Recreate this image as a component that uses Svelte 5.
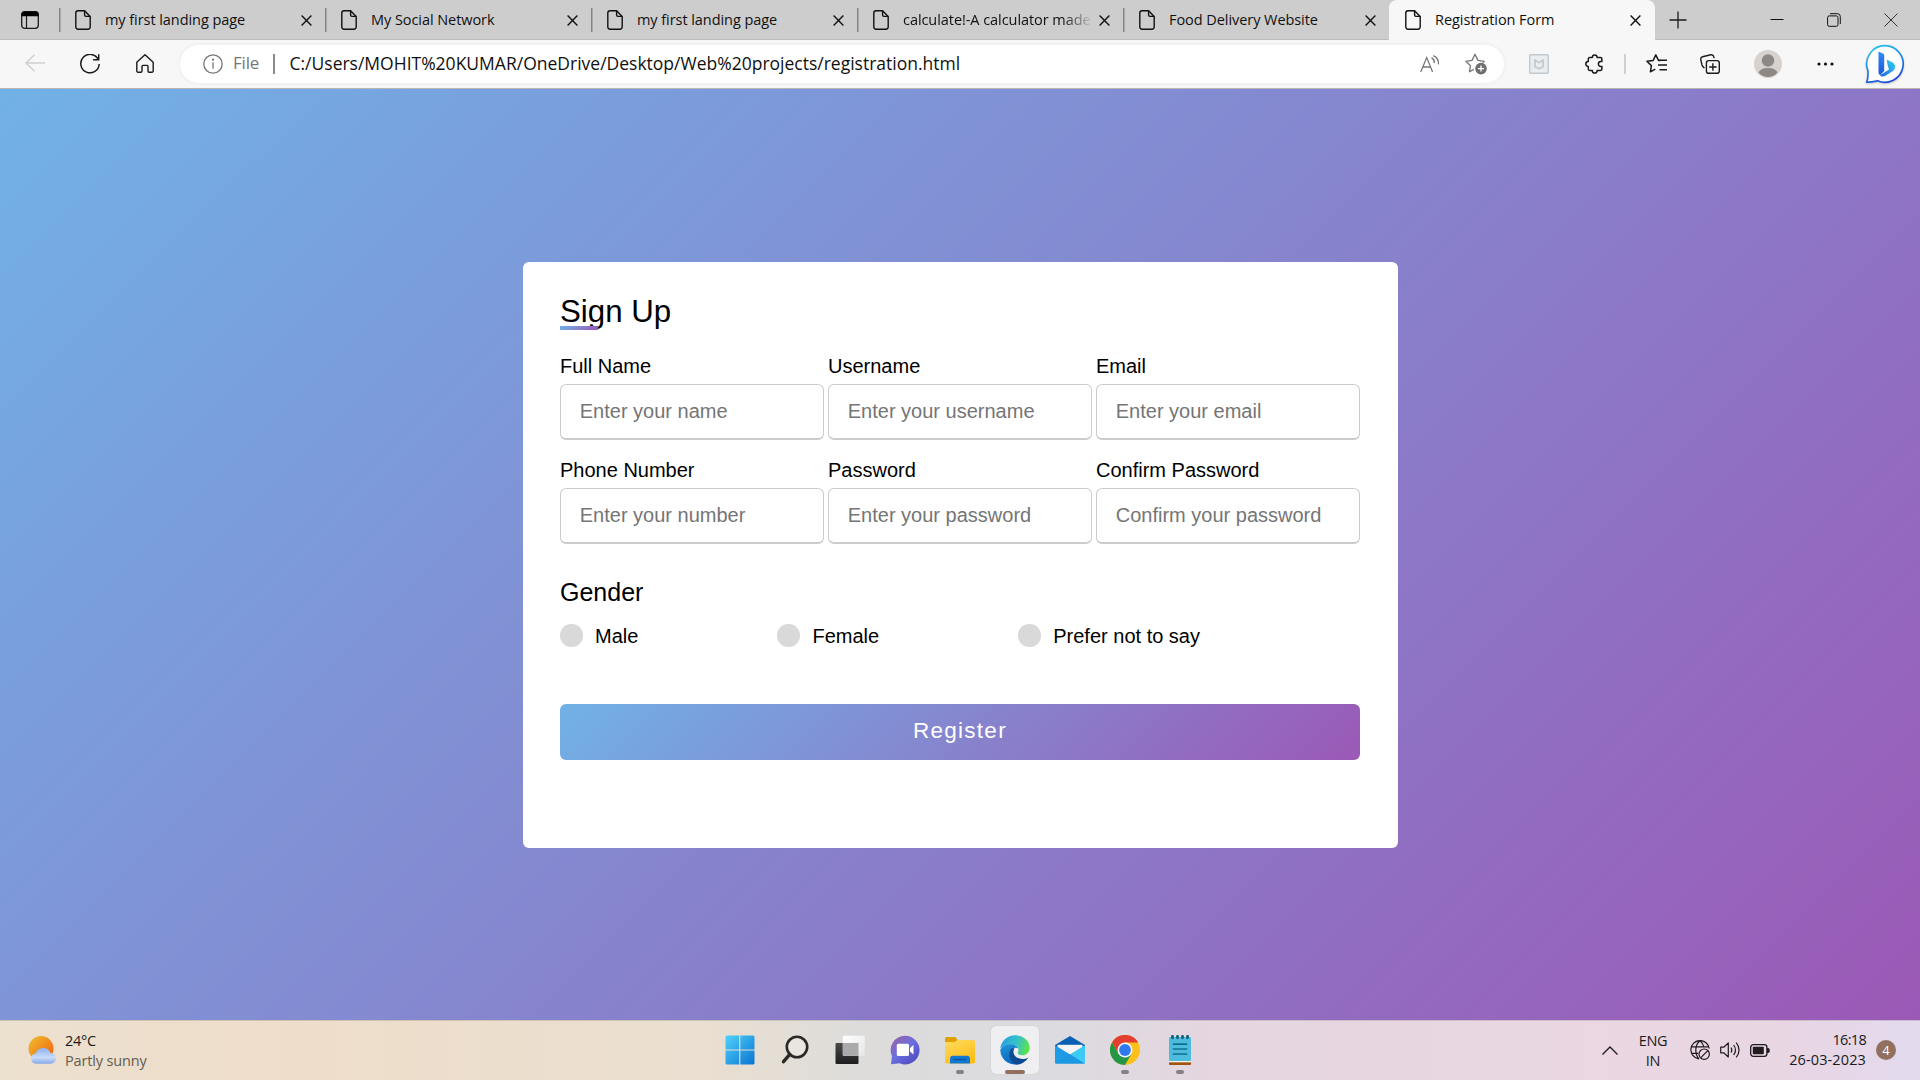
<script>
  const tabs = [
    { title: 'my first landing page' },
    { title: 'My Social Network' },
    { title: 'my first landing page' },
    { title: 'calculate!-A calculator made', clipped: true },
    { title: 'Food Delivery Website' },
    { title: 'Registration Form', active: true }
  ];

  const fields = [
    { label: 'Full Name', placeholder: 'Enter your name', type: 'text' },
    { label: 'Username', placeholder: 'Enter your username', type: 'text' },
    { label: 'Email', placeholder: 'Enter your email', type: 'text' },
    { label: 'Phone Number', placeholder: 'Enter your number', type: 'text' },
    { label: 'Password', placeholder: 'Enter your password', type: 'password' },
    { label: 'Confirm Password', placeholder: 'Confirm your password', type: 'password' }
  ];

  const genders = ['Male', 'Female', 'Prefer not to say'];
</script>

<div class="screen">
  <header class="strip">
    <div class="tab-actions">
      <svg width="18" height="18" viewBox="0 0 18 18">
        <rect x="0.7" y="0.7" width="16.6" height="16.6" rx="3" fill="none" stroke="#1b1b1b" stroke-width="1.3" />
        <path d="M0.5 5.2V3a2.5 2.5 0 0 1 2.5-2.5h12A2.5 2.5 0 0 1 17.5 3v2.2z" fill="#000" />
        <path d="M5.5 5v12" stroke="#1b1b1b" stroke-width="1.2" />
      </svg>
    </div>
    {#each tabs as tab}
      <div class="tab" class:active={tab.active}>
        <svg class="page" width="16" height="20" viewBox="0 0 16 20" fill="none" stroke="#111" stroke-width="1.4" stroke-linejoin="round">
          <path d="M3 0.8h6.6L15.2 6.4V17a2.2 2.2 0 0 1-2.2 2.2H3A2.2 2.2 0 0 1 0.8 17V3A2.2 2.2 0 0 1 3 0.8z" />
          <path d="M9.6 0.8V5a1.4 1.4 0 0 0 1.4 1.4h4.2" />
        </svg>
        <span class="tab-title" class:clipped={tab.clipped}>{tab.title}</span>
        <svg class="x" width="11" height="11" viewBox="0 0 11 11"><path d="M0.6 0.6l9.8 9.8M10.4 0.6L0.6 10.4" stroke="#111" stroke-width="1.4" /></svg>
      </div>
    {/each}
    <div class="new-tab">
      <svg width="18" height="18" viewBox="0 0 18 18"><path d="M9 0.5v17M0.5 9h17" stroke="#1b1b1b" stroke-width="1.3" /></svg>
    </div>
    <div class="window-buttons">
      <svg width="14" height="14" viewBox="0 0 14 14"><path d="M0.5 6.5h13" stroke="#111" /></svg>
      <svg width="14" height="14" viewBox="0 0 14 14" fill="none" stroke="#111">
        <rect x="0.6" y="2.9" width="10.4" height="10.4" rx="1.6" />
        <path d="M3 0.7h7.5a2.8 2.8 0 0 1 2.8 2.8V11" />
      </svg>
      <svg width="14" height="14" viewBox="0 0 14 14"><path d="M0.5 0.5l13 13M13.5 0.5l-13 13" stroke="#333" /></svg>
    </div>
  </header>

  <div class="toolbar">
    <div class="cell w70">
      <svg class="raise" width="20" height="18" viewBox="0 0 20 18" fill="none" stroke="#cfcfcf" stroke-width="1.4"><path d="M20 9H1M9.5 0.7L1 9l8.5 8.3" /></svg>
    </div>
    <div class="cell w40">
      <svg width="20" height="20" viewBox="0 0 20 20" fill="none" stroke="#1b1b1b" stroke-width="1.5"><path d="M18.2 5.4A9.2 9.2 0 1 0 19.2 10M18.7 0.3v5.4h-5.6" /></svg>
    </div>
    <div class="cell w70">
      <svg class="raise" width="18" height="19" viewBox="0 0 18 19" fill="none" stroke="#1b1b1b" stroke-width="1.4" stroke-linejoin="round">
        <path d="M0.8 8.3L9 0.8l8.2 7.5V17a1.2 1.2 0 0 1-1.2 1.2h-2.8A1.2 1.2 0 0 1 12 17v-4.6a1 1 0 0 0-1-1H7a1 1 0 0 0-1 1V17a1.2 1.2 0 0 1-1.2 1.2H2A1.2 1.2 0 0 1 0.8 17z" />
      </svg>
    </div>
    <div class="address">
      <svg class="info" width="20" height="20" viewBox="0 0 20 20" fill="none" stroke="#767676" stroke-width="1.3">
        <circle cx="10" cy="10" r="9.2" /><path d="M10 8.3v6.4" /><circle cx="10" cy="5.7" r="0.5" fill="#767676" />
      </svg>
      <span class="scheme">File</span>
      <span class="bar"></span>
      <span class="url">C:/Users/MOHIT%20KUMAR/OneDrive/Desktop/Web%20projects/registration.html</span>
      <svg class="read" width="20" height="18" viewBox="0 0 20 18" fill="none" stroke="#767676" stroke-width="1.3">
        <path d="M0.7 17L6.7 2.6 12.6 17M2.7 12h7.9" />
        <path d="M11.6 2.6c1.8 1.2 2.8 3 2.8 5.4M13.3 0.6c3.6 1.6 5.4 4.8 5.2 8.8" />
      </svg>
      <svg class="star" width="22" height="22" viewBox="0 0 22 22">
        <path d="M8.8 16.4L4.5 18.7l1-6L0.9 8.3l6.1-0.9L10 1.3l2.9 6.1 6.4 0.9-1.6 1.6" fill="none" stroke="#767676" stroke-width="1.3" stroke-linejoin="round" />
        <circle cx="16" cy="15.6" r="5.8" fill="#6e6e6e" />
        <path d="M16 12.6v6M13 15.6h6" stroke="#fff" stroke-width="1.3" />
      </svg>
    </div>
    <div class="cell w70">
      <svg width="20" height="20" viewBox="0 0 20 20" fill="none" stroke="#c3cacf">
        <rect x="0.7" y="0.7" width="18.6" height="18.6" rx="1" fill="#e9edef" stroke-width="1.4" />
        <path d="M6 6.3l4 2.2 4-2.2v6.3l-4 2.2-4-2.2z" stroke-width="1.8" />
      </svg>
    </div>
    <div class="cell w40">
      <svg width="18" height="20" viewBox="0 0 18 20" fill="none" stroke="#1b1b1b" stroke-width="1.5" stroke-linejoin="round">
        <path d="M4.7 3.5h2.6a2.4 2.6 0 0 1 4.8 0h3.4a1.4 1.4 0 0 1 1.4 1.4v2.7h-1.1a2.4 2.4 0 0 0 0 4.8h1.100v2.700a1.400 1.400 0 0 1-1.400 1.400h-3.400a2.400 2.600 0 0 1-4.800 0h-2.600a1.400 1.400 0 0 1-1.400-1.400v-2.700a2.500 2.400 0 0 1 0-4.800v-2.700a1.400 1.400 0 0 1 1.400-1.400z" />
      </svg>
    </div>
    <div class="cell w22"><span class="divider"></span></div>
    <div class="cell w40">
      <svg width="21" height="20" viewBox="0 0 21 20" fill="none" stroke="#1b1b1b" stroke-width="1.5" stroke-linejoin="round">
        <path d="M14.500 6.600l-2-0.200L9.800 0.900 7.200 6.400l-6.300 0.800 4.500 4.400-1 6.200 4.900-2.700" />
        <path d="M13 6.300h8M12 11h9M13.500 15.700H21" stroke-width="1.400" />
      </svg>
    </div>
    <div class="cell w68">
      <svg width="20" height="20" viewBox="0 0 20 20" fill="none" stroke="#1b1b1b" stroke-width="1.400">
        <rect x="6.400" y="6.600" width="12.900" height="12.700" rx="2.400" />
        <path d="M12.900 9.300v7.400M9.200 13h7.400" />
        <path d="M4.500 13.900L3.600 13.300A4 4 0 0 1 2 11L0.800 5.600A2.400 2.400 0 0 1 2.600 2.800l8.200-2a2.400 2.400 0 0 1 2.900 1.800l0.400 1.600" />
      </svg>
    </div>
    <div class="cell w48">
      <svg width="28" height="28" viewBox="0 0 28 28">
        <circle cx="14" cy="14" r="14" fill="#d5d2cf" />
        <circle cx="14" cy="10.500" r="6.200" fill="#8d8884" />
        <path d="M4.600 22.500C6 19.200 9.600 18 14 18s8 1.200 9.400 4.500A13 13 0 0 1 14 27 13 13 0 0 1 4.600 22.500z" fill="#8d8884" />
      </svg>
    </div>
    <div class="cell w66">
      <svg width="17" height="4" viewBox="0 0 17 4" fill="#111"><circle cx="2" cy="2" r="1.600" /><circle cx="8.500" cy="2" r="1.600" /><circle cx="15" cy="2" r="1.600" /></svg>
    </div>
    <div class="cell w54">
      <svg class="bing" width="40" height="40" viewBox="0 0 40 40">
        <defs>
          <linearGradient id="ring" x1="0.1" y1="0" x2="0.5" y2="1"><stop offset="0" stop-color="#26c6f4" /><stop offset="1" stop-color="#1d4fd8" /></linearGradient>
          <linearGradient id="stem" x1="0" y1="0" x2="0" y2="1"><stop offset="0" stop-color="#2f8df5" /><stop offset="1" stop-color="#1b54dd" /></linearGradient>
          <linearGradient id="bowl" x1="1" y1="0" x2="0" y2="1"><stop offset="0" stop-color="#31dbea" /><stop offset="1" stop-color="#1f5fe6" /></linearGradient>
        </defs>
        <path d="M20 1.700A18.300 18.300 0 1 1 12.600 36.800C9 37.600 5 38.300 1.800 38.200 3 34.500 3.300 31 2.900 26.600A18.300 18.300 0 0 1 20 1.700z" fill="#fff" stroke="url(#ring)" stroke-width="1.700" />
        <path d="M13.500 7.600l4.800 2.100c0.600 0.300 0.900 0.700 0.900 1.400V27l-4.200 4.200c-1-0.700-1.500-1.900-1.500-3.200z" fill="url(#stem)" />
        <path d="M21.600 15.500l6.200 3c2.900 1.700 3 6 0.500 8.200L20.500 31.700c-2.400 1.300-4.400 1-5.500-0.500L24 25.500l-1.400-4.300z" fill="url(#bowl)" />
      </svg>
    </div>
  </div>

  <main class="viewport">
    <form class="card">
      <h1>Sign Up</h1>
      <div class="fields">
        {#each fields as field}
          <label class="field">
            <span>{field.label}</span>
            <input type={field.type} placeholder={field.placeholder} />
          </label>
        {/each}
      </div>
      <h2>Gender</h2>
      <div class="genders">
        {#each genders as gender}
          <div class="gender"><span class="dot"></span>{gender}</div>
        {/each}
      </div>
      <button type="button">Register</button>
    </form>
  </main>

  <footer class="taskbar">
    <div class="weather">
      <svg width="28" height="28" viewBox="0 0 28 28">
        <defs>
          <linearGradient id="sun" x1="0.1" y1="0.1" x2="0.9" y2="0.8"><stop offset="0" stop-color="#f0b62c" /><stop offset="1" stop-color="#ef6c14" /></linearGradient>
          <linearGradient id="cloud" x1="0" y1="0" x2="0" y2="1"><stop offset="0" stop-color="#8fb0ee" /><stop offset="0.600" stop-color="#c9dbf9" /><stop offset="1" stop-color="#86a9ea" /></linearGradient>
        </defs>
        <circle cx="13" cy="12.500" r="12.500" fill="url(#sun)" />
        <path d="M7.500 17.500A8 8 0 0 1 22.500 17a5.400 5.400 0 0 1 0.300 10.800H7.800a5.200 5.200 0 0 1-0.300-10.300z" fill="url(#cloud)" />
      </svg>
      <div class="weather-text"><span>24°C</span><span class="dim">Partly sunny</span></div>
    </div>

    <div class="apps">
      <div class="app">
        <svg width="30" height="30" viewBox="0 0 30 30">
          <defs><linearGradient id="win" x1="0" y1="0" x2="1" y2="1"><stop offset="0" stop-color="#4fd3fd" /><stop offset="1" stop-color="#0a73d0" /></linearGradient></defs>
          <path d="M2 0.500h12.200v14H0.500V2A1.500 1.500 0 0 1 2 0.500zM15.300 0.500H28A1.500 1.500 0 0 1 29.500 2v12.500H15.300zM0.500 15.600h13.700v14H2a1.500 1.500 0 0 1-1.500-1.500zM15.300 15.600h14.200v12.500a1.500 1.500 0 0 1-1.500 1.500H15.300z" fill="url(#win)" />
        </svg>
      </div>
      <div class="app">
        <svg width="30" height="30" viewBox="0 0 30 30" fill="none" stroke="#2b2926">
          <circle cx="17" cy="12" r="10.200" stroke-width="2.600" fill="#fff" fill-opacity="0.250" />
          <path d="M9.800 19.300L3.500 26.600" stroke-width="3.400" stroke-linecap="round" />
        </svg>
      </div>
      <div class="app">
        <svg width="30" height="30" viewBox="0 0 30 30">
          <defs>
            <linearGradient id="tv" x1="0" y1="0" x2="0" y2="1"><stop offset="0" stop-color="#4a4a4a" /><stop offset="1" stop-color="#1d1d1d" /></linearGradient>
            <linearGradient id="tw" x1="0" y1="0" x2="1" y2="1"><stop offset="0" stop-color="#fff" /><stop offset="1" stop-color="#e6e6e6" /></linearGradient>
          </defs>
          <rect x="0.500" y="8" width="23" height="21" rx="1" fill="url(#tv)" />
          <rect x="7.800" y="0.700" width="22" height="20" rx="1" fill="url(#tw)" />
          <path d="M7.800 8h15.700v12.700H7.800z" fill="#aaa" />
        </svg>
      </div>
      <div class="app">
        <svg width="30" height="30" viewBox="0 0 30 30">
          <defs><linearGradient id="chat" x1="0.100" y1="0.200" x2="0.700" y2="0.900"><stop offset="0" stop-color="#8d66b4" /><stop offset="0.500" stop-color="#6a6fe0" /><stop offset="1" stop-color="#5552c4" /></linearGradient></defs>
          <path d="M15 0.800A14.300 14.300 0 1 1 9.500 28.200L1 29.200l1-8A14.300 14.300 0 0 1 15 0.800z" fill="url(#chat)" />
          <rect x="6.800" y="8.700" width="12.200" height="12.200" rx="1.500" fill="#fff" />
          <path d="M20 13l3.500-3v9.600L20 16.600z" fill="#fff" />
        </svg>
      </div>
      <div class="app">
        <svg width="30" height="30" viewBox="0 0 30 30">
          <defs><linearGradient id="folder" x1="0" y1="0" x2="0.600" y2="1"><stop offset="0" stop-color="#ffdc62" /><stop offset="1" stop-color="#fdbe17" /></linearGradient></defs>
          <path d="M1.500 2h8.700l2.600 3-2.600 4H0V3.500A1.500 1.500 0 0 1 1.500 2z" fill="#e0a006" />
          <path d="M0 7h9.600l3-2H28.500A1.500 1.500 0 0 1 30 6.500V27a1.500 1.500 0 0 1-1.500 1.500h-27A1.500 1.500 0 0 1 0 27z" fill="url(#folder)" />
          <path d="M8 20.800h14a3 3 0 0 1 3 3v4.700H5v-4.700a3 3 0 0 1 3-3z" fill="#1279d2" />
          <path d="M8.500 24.500h13" stroke="#0a4f99" stroke-width="1.200" />
        </svg>
        <span class="mark"></span>
      </div>
      <div class="app">
        <div class="tile">
          <svg width="30" height="30" viewBox="0 0 30 30">
            <defs>
              <linearGradient id="e1" x1="0" y1="0.300" x2="1" y2="0.500"><stop offset="0" stop-color="#2a9fe0" /><stop offset="0.550" stop-color="#33c3c8" /><stop offset="1" stop-color="#63e248" /></linearGradient>
              <linearGradient id="e2" x1="0" y1="0" x2="0.400" y2="1"><stop offset="0" stop-color="#1f97dc" /><stop offset="1" stop-color="#0c66bd" /></linearGradient>
            </defs>
            <path d="M0.300 13.500C1.200 5.800 7.300 0.300 15 0.300c8.500 0 14.700 5.700 14.700 12.600 0 4.500-3.400 7.300-7.300 7.300-3.700 0-5.300-1.500-4.400-3.200 1.500-3-0.400-6.700-4.800-7.300C7.600 8.900 3 10.700 0.300 13.500z" fill="url(#e1)" />
            <path d="M0.300 14.600C2.300 10.800 6.500 9 10.900 9.200c4.200 0.200 6.800 2.100 7.400 4.500-2.700-2.500-6.500-0.200-6.800 3.700-0.400 5.300 4 10.600 10 10.700A14.700 14.700 0 0 1 0.300 14.600z" fill="url(#e2)" />
            <path d="M11.900 13.200c-4.200 3.600-3.800 12.900 4.300 16.400 5 0 9.400-3 12.300-7.200-6 3.300-13.800 0.900-14.900-4.200-0.400-2 0-3.600 0.900-4.900z" fill="#0d4b91" />
          </svg>
          <span class="mark wide"></span>
        </div>
      </div>
      <div class="app">
        <svg width="30" height="30" viewBox="0 0 30 30">
          <path d="M0 10L15 1l15 9v8H0z" fill="#0b62b5" />
          <path d="M2.500 9.800h25v10H2.500z" fill="#f6f6f6" />
          <path d="M0 10.200L30 28.500H1A1 1 0 0 1 0 27.500z" fill="#1d9be6" />
          <path d="M30 10.200v17.300a1 1 0 0 1-1 1L15.200 19.200z" fill="#3ccaf6" />
          <path d="M0 28.500h29.500L15.200 19.300z" fill="#1b98e2" />
        </svg>
      </div>
      <div class="app">
        <svg width="30" height="30" viewBox="0 0 30 30">
          <circle cx="15" cy="15" r="15" fill="#fbc11a" />
          <path d="M2 7.500A15 15 0 0 1 28.100 7.500H15L8.500 18.750z" fill="#e43e30" />
          <path d="M2 7.500A15 15 0 0 0 15 30l6.500-11.250L15 22.500 8.500 18.750z" fill="#239746" />
          <circle cx="15" cy="15" r="7.500" fill="#f4f6fb" />
          <circle cx="15" cy="15" r="5.900" fill="#3078ee" />
        </svg>
        <span class="mark"></span>
      </div>
      <div class="app">
        <svg width="30" height="30" viewBox="0 0 30 30">
          <path d="M4 25h22v4a1 1 0 0 1-1 1H5a1 1 0 0 1-1-1z" fill="#a3530f" />
          <path d="M4 24h22v3.300H4z" fill="#f5f2ec" />
          <rect x="4" y="2" width="22" height="24" rx="1.200" fill="#4dbcdc" />
          <path d="M8.500 9.200h13M8.500 14h13M8.500 19h13" stroke="#0f6f90" stroke-width="1.700" stroke-linecap="round" />
          <path d="M7.500 1.300v1.500M12.500 1.300v1.500M17.500 1.300v1.500M22.500 1.300v1.500" stroke="#12627f" stroke-width="2.800" stroke-linecap="round" />
        </svg>
        <span class="mark"></span>
      </div>
    </div>

    <div class="tray">
      <svg class="chevron" width="16" height="9" viewBox="0 0 16 9" fill="none" stroke="#1b1b1b" stroke-width="1.300"><path d="M0.500 8.500L8 1l7.500 7.500" /></svg>
      <div class="lang"><span>ENG</span><span>IN</span></div>
      <svg width="20" height="20" viewBox="0 0 20 20" fill="none" stroke="#1f1b1e" stroke-width="1.200">
        <path d="M8.500 18.800A9.200 9.200 0 1 1 19.200 8.500M1.200 6.800h17.600M1.200 13.300h7M9 19C6.800 16.500 5.800 13.500 5.800 10S7 3 10 0.800c2.200 1.700 3.500 4 4 6.500" />
        <circle cx="14.200" cy="14.200" r="5.200" /><path d="M10.600 17.800l7.200-7.200" />
      </svg>
      <svg width="20" height="18" viewBox="0 0 20 18" fill="none" stroke="#1f1b1e" stroke-width="1.200" stroke-linejoin="round">
        <path d="M0.700 6.200h3L8.300 2v14l-4.600-4.200h-3z" /><path d="M11 6.500c1 1.500 1 3.500 0 5M13.600 4c2.300 3 2.300 7 0 10M16.200 1.600c3.800 4.500 3.800 10.300 0 14.800" />
      </svg>
      <svg width="20" height="13" viewBox="0 0 20 13">
        <rect x="0.700" y="0.700" width="16.200" height="11.600" rx="2.600" fill="none" stroke="#1f1b1e" stroke-width="1.300" />
        <rect x="2.800" y="2.800" width="11" height="7.400" rx="0.800" fill="#1f1b1e" /><path d="M17 4h1.300q1.500 0.200 1.500 2.500T18.300 9H17z" fill="#1f1b1e" />
      </svg>
      <div class="clock"><span class="time">16:18</span><span class="date">26-03-2023</span></div>
      <span class="badge">4</span>
    </div>
  </footer>
</div>

<style>
  :global(body) { margin: 0; overflow: hidden; }
  svg { display: block; flex: none; }
  .screen { width: 1920px; height: 1080px; display: flex; flex-direction: column; font-family: 'Open Sans', 'Noto Sans', sans-serif; }

  .strip { height: 40px; display: flex; background: #cdcdcd; box-shadow: inset 0 -1px 0 #bdbdbd; flex: none; }
  .tab-actions { width: 59px; display: flex; align-items: center; justify-content: flex-end; padding-right: 20px; box-sizing: border-box; }
  .tab { width: 266px; flex: none; box-sizing: border-box; display: flex; align-items: center; padding: 0 13px 0 16px; background: linear-gradient(#858585, #858585) 0 8px / 1.5px 24px no-repeat; }
  .tab.active { background: #f7f7f7; border-radius: 8px 8px 0 0; padding: 0 14px 0 16px; }
  .tab-title { flex: 1; min-width: 0; margin: 0 -10px 1px 14px; white-space: nowrap; font-size: 14.5px; letter-spacing: -0.06px; line-height: 22px; color: #111; }
  .tab-title.clipped { -webkit-mask-image: linear-gradient(90deg, #000 160px, transparent 190px); mask-image: linear-gradient(90deg, #000 160px, transparent 190px); }
  .x { margin: 1px 0 0 10px; }
  .new-tab { display: flex; align-items: center; padding-left: 14px; }
  .window-buttons { flex: 1; display: flex; align-items: center; justify-content: flex-end; gap: 43px; padding-right: 22px; }

  .toolbar { height: 49px; box-sizing: border-box; display: flex; align-items: center; padding-right: 8px; background: #f7f7f7; border-bottom: 1px solid #b9b5b5; flex: none; }
  .cell { height: 48px; display: flex; align-items: center; justify-content: center; flex: none; }
  .w22 { width: 22px; } .w40 { width: 40px; } .w48 { width: 48px; } .w54 { width: 54px; } .w66 { width: 66px; } .w68 { width: 68px; } .w70 { width: 70px; }
  .raise { margin-bottom: 2px; }
  .address { flex: 1; height: 38px; border-radius: 19px; background: #fff; box-shadow: 0 0 5px rgba(0, 0, 0, 0.06); display: flex; align-items: center; padding: 0 17px 0 23px; box-sizing: border-box; font-size: 17.5px; line-height: 24px; }
  .scheme { margin: 0 0 2px 10px; width: 40px; color: #767676; font-size: 17px; letter-spacing: -0.2px; }
  .bar { width: 1.5px; height: 20px; background: #8a8a8a; }
  .url { flex: 1; margin: 0 0 2px 15px; white-space: nowrap; color: #111; }
  .star { margin-left: 25px; }
  .divider { width: 1.5px; height: 20px; background: #cfcfcf; }
  .bing { filter: drop-shadow(0 1px 1px rgba(0, 0, 0, 0.18)); }

  .viewport { height: 931px; flex: none; display: flex; align-items: center; justify-content: center; background: linear-gradient(135deg, #71b1e6, #9b59b6); font-family: 'Liberation Sans', Arial, sans-serif; }
  .card { width: 875px; height: 586px; box-sizing: border-box; padding: 30px 37.5px; background: #fff; border-radius: 6px; display: flex; flex-direction: column; color: #000; }
  h1 { position: relative; margin: 0; height: 38px; line-height: 40px; font-size: 31.25px; font-weight: 400; }
  h1::after { content: ''; position: absolute; left: 0; bottom: 0; width: 37.5px; height: 4px; background: linear-gradient(135deg, #71b1e6, #9b59b6); }
  .fields { display: grid; grid-template-columns: repeat(3, 264px); justify-content: space-between; row-gap: 18px; margin-top: 24px; }
  .field { display: flex; flex-direction: column; font-size: 20px; line-height: 24px; }
  .field input { margin: 6px 0 0; height: 56px; box-sizing: border-box; padding: 0 18.75px; border: 1px solid #ccc; border-bottom-width: 2px; border-radius: 6px; font: 20px 'Liberation Sans', Arial, sans-serif; outline: none; }
  .field input::placeholder { color: #757575; }
  h2 { margin: 33px 0 0; font-size: 25px; line-height: 30px; font-weight: 400; }
  .genders { display: flex; justify-content: space-between; width: 640px; margin-top: 17px; }
  .gender { display: flex; align-items: center; font-size: 20px; line-height: 24px; }
  .dot { width: 22.5px; height: 22.5px; border-radius: 50%; background: #d9d9d9; margin-right: 12.5px; }
  button { margin: 56px 0 0; height: 56px; flex: none; padding: 0 0 1px; border: 0; border-radius: 6px; background: linear-gradient(135deg, #71b1e6, #9b59b6); color: #fff; font: 22.5px 'Liberation Sans', Arial, sans-serif; letter-spacing: 1.25px; }

  .taskbar { height: 60px; flex: none; display: flex; align-items: center; font-size: 14.5px; line-height: 20px; color: #1b1b1b; background: linear-gradient(90deg, #ece0ce 0, #eeddca 300px, #eadfd0 700px, #dddcdb 860px, #dcdbe0 1060px, #e5d6e0 1210px, #ead7e2 1600px, #e8d6e4 1800px, #e3daee 1920px); box-shadow: inset 0 1px 0 rgba(120, 110, 120, 0.25); }
  .weather { width: 712.5px; box-sizing: border-box; padding-left: 28px; display: flex; align-items: center; gap: 9px; }
  .weather-text { display: flex; flex-direction: column; margin-top: 2px; letter-spacing: -0.3px; }
  .dim { color: #625c53; letter-spacing: -0.16px; }
  .apps { display: flex; height: 60px; }
  .app { position: relative; width: 55px; display: flex; align-items: center; justify-content: center; }
  .tile { width: 48px; height: 48px; border-radius: 5px; background: #efeff2; box-shadow: 0 0 1px rgba(0, 0, 0, 0.2); display: flex; align-items: center; justify-content: center; }
  .mark { position: absolute; bottom: 6px; left: 50%; margin-left: -4px; width: 8px; height: 4px; border-radius: 2px; background: #858087; }
  .mark.wide { width: 20px; margin-left: -10px; background: #92705f; }
  .tray { flex: 1; display: flex; align-items: center; justify-content: flex-end; gap: 10px; padding-right: 24px; }
  .chevron { margin-right: 11px; }
  .lang { width: 28px; display: flex; flex-direction: column; align-items: center; margin: 1px 13px 0 0; letter-spacing: -0.3px; }
  .clock { width: 86px; display: flex; flex-direction: column; align-items: flex-end; }
  .time { letter-spacing: -0.7px; }
  .date { letter-spacing: 0.12px; }
  .badge { width: 20px; height: 20px; border-radius: 50%; background: #92705f; color: #fff; font-size: 13px; display: flex; align-items: center; justify-content: center; }
</style>
